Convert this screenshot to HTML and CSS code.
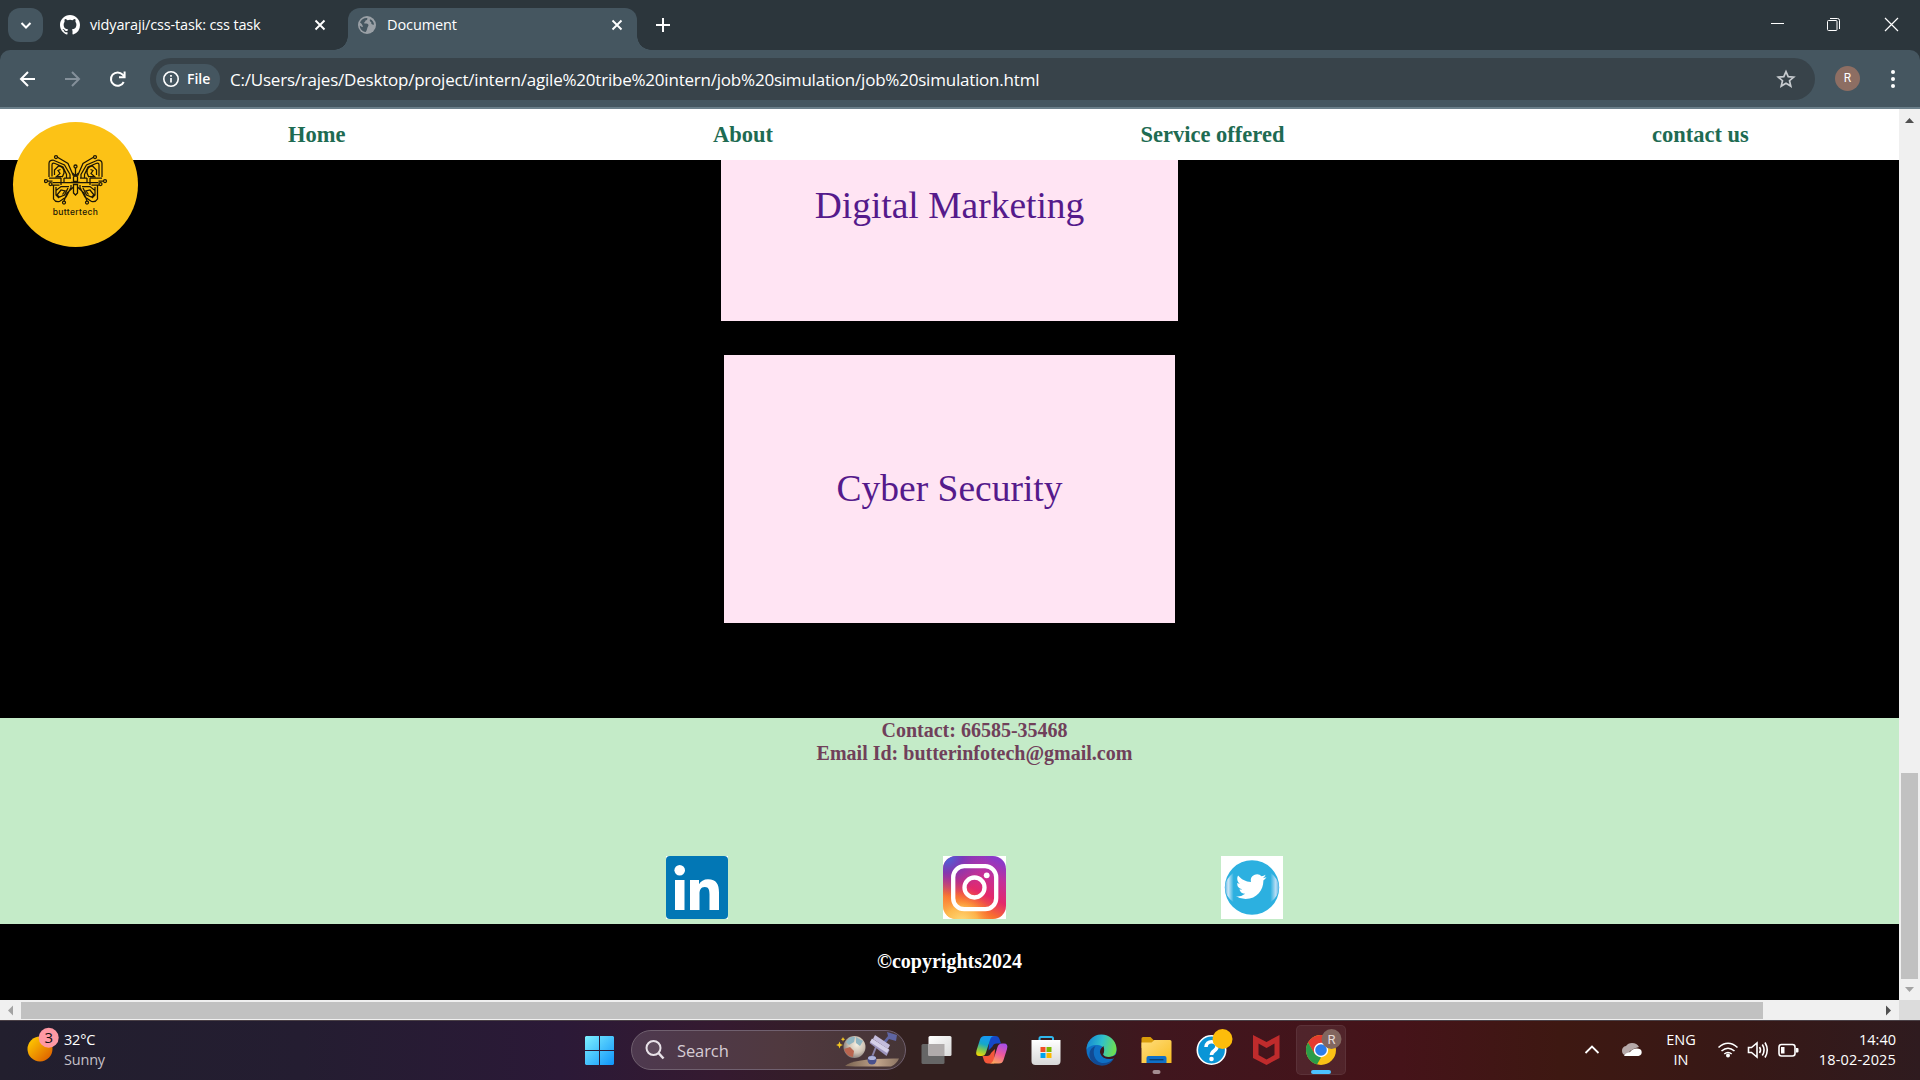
FILE: index.html
```html
<!DOCTYPE html>
<html lang="en">
<head>
<meta charset="utf-8">
<title>Document</title>
<link rel="stylesheet" href="styles.css">
</head>
<body>
<div class="screen">
  <header class="tabstrip">
    <button class="tab-search"><svg width="34" height="34" viewBox="0 0 34 34"><path d="M13.500 15l4.500 4.500 4.500-4.500" fill="none" stroke="#fff" stroke-width="2"/></svg></button>
    <div class="tab tab-idle">
      <svg class="favicon" width="20" height="20" viewBox="0 0 16 16"><path fill="#fff" d="M8 0C3.580 0 0 3.580 0 8c0 3.540 2.290 6.530 5.470 7.590.4.070.550-.170.550-.380 0-.190-.010-.820-.010-1.490-2.010.370-2.530-.490-2.690-.940-.090-.230-.480-.940-.820-1.130-.280-.150-.680-.520-.010-.530.630-.010 1.080.580 1.230.820.720 1.210 1.870.870 2.330.660.070-.520.280-.870.510-1.070-1.780-.2-3.640-.890-3.640-3.950 0-.870.310-1.590.820-2.150-.080-.2-.360-1.020.080-2.120 0 0 .670-.210 2.200.820a7.600 7.600 0 0 1 4 0c1.530-1.040 2.200-.820 2.200-.820.440 1.100.160 1.920.080 2.120.510.560.820 1.270.820 2.150 0 3.070-1.870 3.750-3.650 3.950.290.250.540.730.540 1.480 0 1.070-.010 1.930-.010 2.200 0 .210.150.460.550.380A8.010 8.010 0 0 0 16 8c0-4.420-3.580-8-8-8z"/></svg>
      <span class="tab-title t-git">vidyaraji/css-task: css task</span>
      <svg class="tab-close" width="12" height="12" viewBox="0 0 12 12"><path d="M1.500 1.500l9 9M10.500 1.500l-9 9" stroke="#fff" stroke-width="1.900"/></svg>
    </div>
    <div class="tab tab-active">
      <svg class="favicon" width="18" height="18" viewBox="0 0 18 18"><circle cx="9" cy="9" r="9" fill="#9aa0a6"/><path d="M2 6.500C3 3.500 6 1.700 9.300 2c.2 1.500-.3 2.300-1.800 2.500-.2 1.700-1.300 1.600-1.500 2.700 1 .5 3.500-.3 4.300 1.300.7 1.500-.8 2.300-1 3.500-.1 1-.6 2.500-1.600 4C4 15.500 1.700 12.500 1.800 9.500c1.200 1.200 2 1.600 3.200 1.300C4.500 9 3.500 7.500 2 6.500zM12 3.300c-.6 1.500 0 2.400 1.300 2.800-.5 1.600.5 2.700 2.700 2.600 0-2.300-1.500-4.600-4-5.400z" fill="#455660"/></svg>
      <span class="tab-title t-doc">Document</span>
      <svg class="tab-close" width="12" height="12" viewBox="0 0 12 12"><path d="M1.500 1.500l9 9M10.500 1.500l-9 9" stroke="#fff" stroke-width="1.900"/></svg>
    </div>
    <svg class="new-tab" width="14" height="16" viewBox="0 0 14 16"><path d="M7 1v14M0 8h14" stroke="#fff" stroke-width="2"/></svg>
    <div class="window-buttons">
      <svg width="56" height="50" viewBox="2 0 56 50"><path d="M21 23.500h13" stroke="#fff"/></svg>
      <svg width="56" height="50" viewBox="3 0 56 50"><path d="M25 18.500h7.500a2 2 0 0 1 2 2V29" fill="none" stroke="#fff"/><rect x="22.500" y="20.500" width="9.500" height="10" rx="1" fill="none" stroke="#fff"/></svg>
      <svg width="56" height="50" viewBox="1 0 56 50"><path d="M22 18l13 13M35 18L22 31" stroke="#fff" stroke-width="1.200"/></svg>
    </div>
  </header>

  <div class="toolbar">
    <svg class="nav-icon" width="45" height="40" viewBox="0 0 45 40"><path d="M35 20H21M28 13l-7 7 7 7" fill="none" stroke="#fff" stroke-width="2"/></svg>
    <svg class="nav-icon" width="45" height="40" viewBox="0 0 45 40"><path d="M20 20h14M27 13l7 7-7 7" fill="none" stroke="#84909a" stroke-width="2"/></svg>
    <svg class="nav-icon" width="45" height="40" viewBox="0 0 45 40"><path d="M33.700 23a6.700 6.700 0 1 1-1-7.300l1.700 2" fill="none" stroke="#fff" stroke-width="2"/><path d="M29 18.300h5.600v-5.800" fill="none" stroke="#fff" stroke-width="2"/></svg>
    <div class="omnibox">
      <div class="file-chip">
        <svg width="16" height="16" viewBox="0 0 16 16"><circle cx="8" cy="8" r="7.200" fill="none" stroke="#fff" stroke-width="1.600"/><path d="M8 7v4.500M8 4v1.700" stroke="#fff" stroke-width="1.700"/></svg>
        <span>File</span>
      </div>
      <span class="url">C:/Users/rajes/Desktop/project/intern/agile%20tribe%20intern/job%20simulation/job%20simulation.html</span>
      <svg class="star" width="20" height="20" viewBox="0 0 20 20"><path d="M10 2.600l2.200 5 5.500.5-4.200 3.600 1.300 5.400-4.800-2.900-4.800 2.900 1.300-5.400L2.300 8.100l5.500-.5z" fill="none" stroke="#c7cbcf" stroke-width="1.700"/></svg>
    </div>
    <span class="avatar">R</span>
    <svg class="kebab" width="6" height="20" viewBox="0 0 6 20"><g fill="#fff"><circle cx="3" cy="3" r="2"/><circle cx="3" cy="10" r="2"/><circle cx="3" cy="17" r="2"/></g></svg>
  </div>

  <div class="viewport">
    <main class="page">
      <nav class="site-nav">
        <a>Home</a><a>About</a><a>Service offered</a><a>contact us</a>
      </nav>
      <div class="logo">
        <svg width="64" height="52" viewBox="0 0 64 52">
          <defs>
            <g id="wing" fill="none" stroke="#1c1606" stroke-width="1.250">
              <path d="M29.500 22L24 9.500 13.500 3.300M5 23V9.500q0-3.500 4-3.500l11.500 5 5.500 9.500v4M8 22.500V11q0-2.500 3-1.500l8 3.500 3.500 7.500v3M10.500 21v-5l4-4q6 1 5.500 7l-1.500 3.500h-6l3.500-3-2-3 2.500-1M3.500 27h5M5 24h12M8.500 28.500H27M7.500 31h8M17 24v7M20 24v4M20 24h7"/>
              <path d="M9.500 31v14q2 3.500 6 2.500l6.500-4.500 5-9.500V31M12 33v8l3 3M25 32.500h-8l-5 4v5M24 34l-3.500 7-5 2-2.500-2 4-5 4 1-2.500 3.500M29.500 33l-6.500 6-3 8"/>
              <circle cx="12" cy="3" r="1.500"/><circle cx="2" cy="27" r="1.500"/><circle cx="6.500" cy="30" r="1.500"/><circle cx="20" cy="48.500" r="1.500"/>
            </g>
          </defs>
          <use href="#wing"/>
          <use href="#wing" transform="matrix(-1 0 0 1 63 0)"/>
          <g fill="none" stroke="#1c1606" stroke-width="1.300"><circle cx="31.500" cy="12.500" r="1.500"/><path d="M31.500 14v7M28.500 19l3 3 3-3M29.500 27.500V23l2-2 2 2v4.500zM29.500 30.500h4v8.500l-2 2-2-2zM27 28.500h9"/></g>
        </svg>
        <span>buttertech</span>
      </div>
      <section class="services">
        <a class="card card-first">Digital Marketing</a>
        <a class="card">Cyber Security</a>
      </section>
      <footer class="contact">
        <p>Contact: 66585-35468<br>Email Id: butterinfotech@gmail.com</p>
        <div class="socials">
          <svg width="62" height="63" viewBox="0 0 62 63"><path fill="#fff" d="M0 0h62v63H0z"/><rect width="62" height="63" rx="4" fill="#0277b5"/><g fill="#fff"><circle cx="13.700" cy="14.200" r="5.300"/><path d="M9 24h9.500v30H9zM24 24h9v4.200c1.500-3 4.800-5 9-5 8.500 0 11 5.300 11 13.300V54h-9.500V38.500c0-4-.6-7.500-4.700-7.500-4.300 0-5.300 3.300-5.300 7.300V54H24z"/></g></svg>
          <svg width="63" height="63" viewBox="0 0 63 63"><defs><linearGradient id="ig" x1=".25" y1="1" x2=".75" y2="0"><stop offset="0" stop-color="#fdb04b"/><stop offset=".25" stop-color="#f9702e"/><stop offset=".48" stop-color="#e3296b"/><stop offset=".75" stop-color="#c4309a"/><stop offset="1" stop-color="#8a3ac8"/></linearGradient><radialGradient id="igb" cx=".05" cy="0" r=".65"><stop offset="0" stop-color="#3f6fe0"/><stop offset=".4" stop-color="#6a3cc0" stop-opacity=".8"/><stop offset="1" stop-color="#8a38b8" stop-opacity="0"/></radialGradient><radialGradient id="igy" cx=".3" cy="1.050" r=".5"><stop offset="0" stop-color="#ffdc7c"/><stop offset=".5" stop-color="#fec050" stop-opacity=".75"/><stop offset="1" stop-color="#f9702e" stop-opacity="0"/></radialGradient></defs><path fill="#fff" d="M0 0h63v63H0z"/><rect width="63" height="63" rx="13" fill="url(#ig)"/><rect width="63" height="63" rx="13" fill="url(#igb)"/><rect width="63" height="63" rx="13" fill="url(#igy)"/><g fill="none" stroke="#fff" stroke-width="4.300"><rect x="10.200" y="10.200" width="43" height="43" rx="11"/><circle cx="31.500" cy="31.500" r="10"/></g><circle cx="43.700" cy="19.300" r="2.900" fill="#fff"/></svg>
          <svg width="62" height="63" viewBox="0 0 62 63"><defs><linearGradient id="tw"><stop offset="0" stop-color="#58b4e4"/><stop offset=".06" stop-color="#c9e6f7"/><stop offset=".16" stop-color="#2cb0e0"/><stop offset=".84" stop-color="#2cb0e0"/><stop offset=".94" stop-color="#b9def5"/><stop offset="1" stop-color="#58b4e4"/></linearGradient></defs><path fill="#fff" d="M0 0h62v63H0z"/><circle cx="31" cy="31.500" r="27.200" fill="#2cb0e0"/><ellipse cx="31" cy="31.500" rx="27" ry="20" fill="url(#tw)"/><path fill="#fff" transform="translate(15 15.500) scale(1.270)" d="M23.950 4.570a10 10 0 0 1-2.820.77 4.960 4.960 0 0 0 2.160-2.720c-.95.55-2 .95-3.130 1.180a4.920 4.920 0 0 0-8.380 4.480C7.690 8.100 4.070 6.130 1.640 3.160a4.820 4.820 0 0 0-.67 2.480c0 1.710.87 3.210 2.190 4.100a4.900 4.900 0 0 1-2.230-.62v.06a4.920 4.920 0 0 0 3.950 4.830 5 5 0 0 1-2.210.08 4.940 4.940 0 0 0 4.600 3.420A9.870 9.870 0 0 1 0 19.540a13.990 13.990 0 0 0 7.550 2.210c9.050 0 14-7.500 14-13.980 0-.21 0-.42-.02-.63a9.940 9.940 0 0 0 2.460-2.550z"/></svg>
        </div>
      </footer>
      <div class="copyright">©copyrights2024</div>
    </main>
    <div class="vscroll">
      <svg width="21" height="21" viewBox="0 0 21 21"><path d="M6 14l4.500-5 4.500 5z" fill="#505050"/></svg>
      <div class="vthumb"></div>
      <svg width="21" height="21" viewBox="0 0 21 21"><path d="M6 8l4.500 5L15 8z" fill="#a3a3a3"/></svg>
    </div>
    <div class="hscroll">
      <svg width="21" height="20" viewBox="0 0 21 20"><path d="M13 5.500L8 10.500l5 5z" fill="#a3a3a3"/></svg>
      <div class="hthumb"></div>
      <svg class="h-end" width="21" height="20" viewBox="0 0 21 20"><path d="M8 5.500l5 5-5 5z" fill="#505050"/></svg>
    </div>
    <div class="scroll-corner"></div>
  </div>

  <div class="taskbar">
    <div class="weather">
      <svg width="38" height="60" viewBox="24 1020 38 60"><defs><linearGradient id="sun" x1="0" y1="0" x2="1" y2="1"><stop offset=".1" stop-color="#ffc800"/><stop offset="1" stop-color="#d95400"/></linearGradient></defs><circle cx="40" cy="1049" r="12.500" fill="url(#sun)"/><circle cx="48.700" cy="1037.700" r="10" fill="#ff99a4"/><text x="48.700" y="1043" text-anchor="middle" class="badge-text">3</text></svg>
      <div class="weather-text"><span class="temp">32°C</span><span class="cond">Sunny</span></div>
    </div>
    <div class="apps">
      <svg width="55" height="60" viewBox="572 1020 55 60"><defs><linearGradient id="win" gradientUnits="userSpaceOnUse" x1="585" y1="1036" x2="614" y2="1065"><stop offset="0" stop-color="#7df0ff"/><stop offset="1" stop-color="#0f94fa"/></linearGradient></defs><path fill="url(#win)" d="M586 1036h13v14h-14v-13zM600 1036h13l1 1v13h-14zM585 1051h14v14h-13l-1-1zM600 1051h14v13l-1 1h-13z"/></svg>
      <div class="search">
        <svg width="20" height="20" viewBox="0 0 20 20"><circle cx="8.500" cy="8" r="7" fill="#ffffff18" stroke="#e8e2e8" stroke-width="2"/><path d="M13.500 13l5 5.500" stroke="#e8e2e8" stroke-width="2.500"/></svg>
        <span>Search</span>
        <svg class="search-art" width="66" height="38" viewBox="836 1031 66 38">
          <defs><radialGradient id="globe" cx=".6" cy=".4" r=".6"><stop offset="0" stop-color="#f4efe2"/><stop offset=".6" stop-color="#cfc3b4"/><stop offset="1" stop-color="#8d8580"/></radialGradient><linearGradient id="sand"><stop offset="0" stop-color="#7a6350"/><stop offset=".6" stop-color="#c0a48b"/><stop offset="1" stop-color="#8c7462"/></linearGradient></defs>
          <path d="M845 1066q8-8 54-7.500-2 5-8 8h-36z" fill="url(#sand)"/>
          <circle cx="854.500" cy="1047" r="11" fill="url(#globe)"/>
          <path d="M846 1042q4-6 9-5l-1 5-5 3zM856 1037l7 4-3 5-4-3z" fill="#8fb4c0"/><path d="M844 1049l6-2 4 4-1 6q-7-1-9-8z" fill="#b9654f"/>
          <path d="M839.500 1041.500l1 2.500 2.500 1-2.500 1-1 2.500-1-2.500-2.500-1 2.500-1zM843 1037l.7 1.500 1.500.7-1.500.7-.7 1.500-.7-1.500-1.500-.7 1.500-.7z" fill="#f3c623"/>
          <path d="M872 1057l4-10" stroke="#8a84a8" stroke-width="2"/><circle cx="872" cy="1060" r="4.500" fill="#48508c"/><ellipse cx="872" cy="1058" rx="4" ry="2" fill="#aeb4dc"/>
          <path d="M883 1042l5-6-1-4 10 3-1 6-7-2-4 5z" fill="#5f65a2"/>
          <path d="M869.500 1043l3-4 17 11-3 6z" fill="#9d95bd"/><path d="M870 1042l2-3.500 17 11-2 3.500z" fill="#d5d0e8"/><path d="M873 1039l2-4 15 10-2 4z" fill="#c3bcdc"/>
        </svg>
      </div>
      <svg width="55" height="60" viewBox="908.500 1020 55 60"><defs><linearGradient id="tv1" x1="0" y1="0" x2="1" y2="1"><stop offset="0" stop-color="#fff"/><stop offset="1" stop-color="#d9d9d9"/></linearGradient></defs><rect x="921" y="1044" width="23" height="20" rx="1.500" fill="#666"/><rect x="928" y="1036" width="23" height="20" rx="1.500" fill="url(#tv1)"/><path d="M928 1044h16v12h-16z" fill="#b0abab"/></svg>
      <svg width="55" height="60" viewBox="963.500 1020 55 60"><defs><linearGradient id="cp1" x1=".5" y1="0" x2=".2" y2="1"><stop offset=".1" stop-color="#169bf0"/><stop offset=".4" stop-color="#16a8c8"/><stop offset=".7" stop-color="#82c84c"/><stop offset="1" stop-color="#f5d800"/></linearGradient><linearGradient id="cp2" x1=".7" y1="0" x2=".3" y2="1"><stop offset="0" stop-color="#a84ee8"/><stop offset=".5" stop-color="#ef5a9a"/><stop offset="1" stop-color="#fba85c"/></linearGradient></defs><path d="M989 1036h6q3 0 4 3l1.500 4.500H996q-3 0-4 3l-4 4z" fill="#1548c8"/><path d="M993.500 1063.500h-6q-3 0-4-3l-1.500-4.500h4.500q3 0 4-3l4-4z" fill="#f4573a"/><path d="M984 1036h10q-3.500 0-4.500 4l-4 12.500q-1 3.500-4.500 3.500h-2q-4.500 0-3-5.500l3.500-11q1-3.500 4.500-3.500z" fill="url(#cp1)"/><path d="M998.500 1063.500h-10q3.500 0 4.500-4l4-12.500q1-3.500 4.500-3.500h2q4.500 0 3 5.500l-3.500 11q-1 3.500-4.500 3.500z" fill="url(#cp2)"/></svg>
      <svg width="55" height="60" viewBox="1018.500 1020 55 60"><defs><linearGradient id="st" x1="0" y1="0" x2="0" y2="1"><stop offset="0" stop-color="#fff"/><stop offset="1" stop-color="#d8d8d8"/></linearGradient></defs><path d="M1039 1041v-2.500q0-1.500 1.500-1.500h10.500q1.500 0 1.500 1.500v2.500" fill="none" stroke="#2fb7ec" stroke-width="2"/><path d="M1031 1040h29v21q0 4-4 4h-21q-4 0-4-4z" fill="url(#st)"/><path fill="#f04e24" d="M1040 1047h5v5h-5z"/><path fill="#7db901" d="M1046 1047h5v5h-5z"/><path fill="#00a3ee" d="M1040 1053h5v5h-5z"/><path fill="#fdb800" d="M1046 1053h5v5h-5z"/></svg>
      <svg width="55" height="60" viewBox="1073.500 1020 55 60"><defs><linearGradient id="ed" x1="0" y1=".3" x2="1" y2=".5"><stop offset="0" stop-color="#1585d4"/><stop offset=".5" stop-color="#2fc0cc"/><stop offset="1" stop-color="#6fe04e"/></linearGradient></defs><circle cx="1101" cy="1050" r="15" fill="#0f6fc4"/><path d="M1086 1050a15 15 0 0 1 30-1c0 6-4 8-8 8-4 0-6-2-5-4 2-4-1-8-6-8-6 0-10 2-11 5z" fill="url(#ed)"/><path d="M1095 1046c-4 6-1 17 8 17 4 0 7-1.500 10-4-5 9-17 8-22 2-4-6-2-13 4-15z" fill="#114a94"/><path d="M1103 1046q-5 4-3 8 2 5 9 5 4 0 6-1.500l-1 2.500q3-3 2-6-3 3-8 3-4 0-5.500-2.500 2-3 .5-8.500z" fill="#3d161b"/></svg>
      <svg width="55" height="60" viewBox="1128.500 1020 55 60"><defs><linearGradient id="fo" x1="0" y1="0" x2="1" y2="1"><stop offset="0" stop-color="#ffdd7e"/><stop offset="1" stop-color="#f8bd20"/></linearGradient></defs><path d="M1141 1038.500q0-1.500 1.500-1.500h7.500l3 3h14v8h-26z" fill="#d99c0a"/><path d="M1141 1042.500h10l3-2.500h15.500q1.500 0 1.500 1.500V1063h-30z" fill="url(#fo)"/><path d="M1146 1063v-5q0-2 2-2h16q2 0 2 2v5z" fill="#0f70c8"/><path d="M1149 1059.700h14" stroke="#0a4070" stroke-width="1.400"/><rect x="1152" y="1070" width="8" height="4" rx="2" fill="#a58e92"/></svg>
      <svg width="55" height="60" viewBox="1183.500 1020 55 60"><circle cx="1211" cy="1050" r="14.200" fill="#0a95d6" stroke="#fff" stroke-width="1.600"/><path d="M1205.500 1047c0-7 11-7 11-.5 0 4.500-5.500 4-5.500 8.500" fill="none" stroke="#fff" stroke-width="3.600"/><circle cx="1211" cy="1059" r="2.300" fill="#fff"/><circle cx="1222" cy="1039" r="10" fill="#fdbc0b"/></svg>
      <svg width="55" height="60" viewBox="1238.500 1020 55 60"><path d="M1252.500 1035l13.500 7 13-7v23l-13 7-13.500-7zM1258 1043.500v11.500l8 4.500 8-4.500v-11.500l-8 4.500z" fill="#bf2b2c" fill-rule="evenodd"/></svg>
      <div class="app-open"><svg width="50" height="50" viewBox="1296 1025 50 50"><g><circle cx="1321" cy="1050" r="15" fill="#fbc116"/><path d="M1308 1042.500a15 15 0 0 1 26 0l-13 .5-6.500 11z" fill="#e33b2e"/><path d="M1308 1042.500l6.500 11 6.500 4-4 7a15 15 0 0 1-9-22z" fill="#2a9c48"/><circle cx="1321" cy="1050" r="7.200" fill="#fff"/><circle cx="1321" cy="1050" r="5.800" fill="#2b7de9"/></g><circle cx="1331.500" cy="1039" r="10" fill="#82665f"/><text x="1331.500" y="1043.500" text-anchor="middle" class="chrome-badge">R</text><rect x="1311" y="1070" width="20" height="4" rx="2" fill="#4cc2ff"/></svg></div>
    </div>
    <div class="tray">
      <svg width="70" height="60" viewBox="1580 1020 70 60"><path d="M1586.500 1053l6.500-6.500 6.500 6.500" fill="none" stroke="#fff" stroke-width="1.800"/><path d="M1623 1051a5 5 0 0 1 4-5q2-3 6-3 5 0 7 4-5 1-9 4l-3 4.500q-5-.5-5-4.500z" fill="#b6a9a9"/><path d="M1625 1056q1-3 6-4 3-4 7-3.500 4 0 4.500 2.500 1 4-3 5z" fill="#fff"/></svg>
      <div class="lang"><span>ENG</span><span>IN</span></div>
      <svg width="90" height="60" viewBox="1713 1020 90 60"><g fill="none" stroke="#fff" stroke-width="1.600"><path d="M1718.500 1047.500q9.500-8.500 19 0M1721.500 1051q6.500-5.500 13 0M1724.300 1054q3.700-3 7.400 0"/><path d="M1748.500 1047.500h3l5.500-4.500v14l-5.500-4.500h-3z"/><path d="M1759.500 1047q2 3 0 6M1762.300 1044.500q3.500 5.500 0 11M1765 1042.500q4.500 7.500 0 15"/><rect x="1779" y="1044.500" width="16" height="11.500" rx="2.500"/></g><circle cx="1728" cy="1055.500" r="2" fill="#fff"/><path d="M1781 1047h3.500v6.500h-3.500zM1796 1048h1.500q1 0 1 1v2.500q0 1-1 1h-1.500z" fill="#fff"/></svg>
      <div class="clock"><span class="time">14:40</span><span class="date">18-02-2025</span></div>
    </div>
  </div>
</div>
</body>
</html>
```
FILE: styles.css
```css
* { box-sizing: border-box; }
body { margin: 0; background: #000; overflow: hidden; }
svg { display: block; flex: none; }
.screen { width: 1920px; height: 1080px; display: flex; flex-direction: column; font-family: "Open Sans", "Noto Sans", sans-serif; color: #fff; background: #2c363c; }
span { white-space: nowrap; }

/* Browser chrome */
.tabstrip { height: 50px; display: flex; background: #2c363c; }
.tab-search { width: 35px; height: 34px; margin: 8px 0 0 8px; padding: 0; border: 0; border-radius: 12px; background: #455660; }
.tab { height: 42px; margin-top: 8px; display: flex; align-items: center; padding-bottom: 9px; }
.tab-idle { width: 305px; padding-left: 17px; padding-right: 22px; }
.tab-active { width: 289px; padding-left: 10px; padding-right: 14px; background: #455660; border-radius: 12px 12px 0 0; position: relative; }
.tab-active::before, .tab-active::after { content: ""; position: absolute; bottom: 0; width: 14px; height: 14px; }
.tab-active::before { left: -14px; background: radial-gradient(circle at 0 0, transparent 13.500px, #455660 14px); }
.tab-active::after { right: -14px; background: radial-gradient(circle at 100% 0, transparent 13.500px, #455660 14px); }
.tab-title { font-size: 14.500px; line-height: 20px; margin-left: 10px; padding-top: 1px; letter-spacing: -.15px; }
.t-doc { margin-left: 11px; letter-spacing: -.1px; }
.tab-close { margin-left: auto; }
.new-tab { margin: 17px 0 0 19px; }
.window-buttons { display: flex; margin-left: auto; }
.toolbar { height: 59px; display: flex; align-items: center; background: #455660; border-bottom: 2px solid #6b7f8a; border-radius: 10px 10px 0 0; }
.omnibox { width: 1665px; height: 42px; margin-left: 15px; display: flex; align-items: center; background: #38434a; border-radius: 21px; padding: 0 19px 0 6px; }
.file-chip { width: 64px; height: 30px; display: flex; align-items: center; gap: 8px; padding-left: 7px; border-radius: 15px; background: #455660; font-size: 14px; font-weight: 600; }
.url { margin-left: 10px; padding-top: 1px; font-size: 17px; letter-spacing: -.215px; }
.star { margin-left: auto; }
.avatar { width: 25px; height: 25px; margin-left: 20px; border-radius: 50%; background: #8d6e63; font: 12px/25px Roboto, sans-serif; text-align: center; }
.kebab { margin-left: 30px; }

/* Web page */
.viewport { height: 911px; display: grid; grid-template: 891px 20px / 1899px 21px; }
.page { position: relative; background: #000; font-family: "Liberation Serif", "Times New Roman", serif; overflow: hidden; }
.site-nav { height: 51px; display: flex; gap: 367.500px; background: #fff; padding: 13px 0 0 288px; color: #1e6b52; font-size: 22.500px; line-height: 26px; font-weight: bold; white-space: nowrap; }
.logo { position: absolute; left: 13px; top: 13px; width: 125px; height: 125px; border-radius: 50%; background: #fcc216; display: flex; flex-direction: column; align-items: center; padding-top: 32px; }
.logo span { font: 500 8.500px/10px Inter, sans-serif; letter-spacing: .35px; color: #1c1606; margin-top: 1px; }
.services { height: 558px; display: flex; flex-direction: column; align-items: center; gap: 34px; }
.card { width: 451px; height: 268px; background: #ffe4f3; color: #551a8b; font-size: 37.500px; display: flex; align-items: center; justify-content: center; padding-bottom: 2px; }
.card-first { width: 457px; height: 161px; padding-bottom: 70px; }
.contact { height: 206px; background: #c4ebc8; color: #70405a; font-size: 20px; line-height: 23px; font-weight: bold; text-align: center; padding: 1px 0 0 50px; }
.contact p { margin: 0; }
.socials { display: flex; justify-content: space-between; width: 617px; margin: 91px 0 0 616px; }
.copyright { height: 76px; font-size: 20px; line-height: 75px; font-weight: bold; text-align: center; }
.vscroll { background: #f0f0f0; display: flex; flex-direction: column; }
.vthumb { width: 17px; height: 206px; margin: 643px 2px 0; background: #c1c1c1; }
.hscroll { background: #f0f0f0; display: flex; }
.hthumb { width: 1742px; height: 17px; margin-top: 2px; background: #c1c1c1; }
.h-end { margin-left: auto; }
.scroll-corner { background: #dcdcdc; }

/* Taskbar */
.taskbar { height: 60px; display: grid; grid-template-columns: 572px 774px 1fr; border-top: 1px solid #4a4046; background: linear-gradient(90deg, #221f2e 0, #241d31 300px, #2b1937 560px, #351a30 720px, #33201f 900px, #33201f 1010px, #40161e 1160px, #451319 1400px, #3e1812 1560px, #371816 1740px, #2f1b1f 1920px); }
.taskbar > div { display: flex; margin-top: -1px; height: 60px; }
.weather { padding-left: 24px; }
.badge-text { font-size: 15px; fill: #111; }
.weather-text, .lang, .clock { display: flex; flex-direction: column; font-size: 14.500px; line-height: 20px; padding-top: 10px; }
.weather-text { padding-left: 2px; letter-spacing: -.2px; }
.cond { color: #c5c0c8; }
.search { width: 275px; height: 40px; margin: 10px 2.500px 0 4px; display: flex; align-items: center; border: 1px solid #70606f; border-radius: 20px; background: linear-gradient(90deg, #4e394f, #50393f 55%, #463536); padding-left: 13px; font-size: 16.500px; color: #d6ccd4; }
.search span { margin-left: 12px; letter-spacing: -.1px; }
.search-art { margin-left: auto; margin-right: 3px; }
.app-open { width: 50px; height: 50px; margin: 5px 0 0 2px; border-radius: 5px; background: #ffffff12; box-shadow: inset 0 0 0 1px #ffffff10; }
.chrome-badge { font: 13px Roboto, sans-serif; fill: #e8dcd8; }
.tray { justify-content: flex-end; padding-right: 24px; }
.lang { width: 64px; align-items: center; }
.clock { width: 93px; align-items: flex-end; }
.date { letter-spacing: .15px; }
```
